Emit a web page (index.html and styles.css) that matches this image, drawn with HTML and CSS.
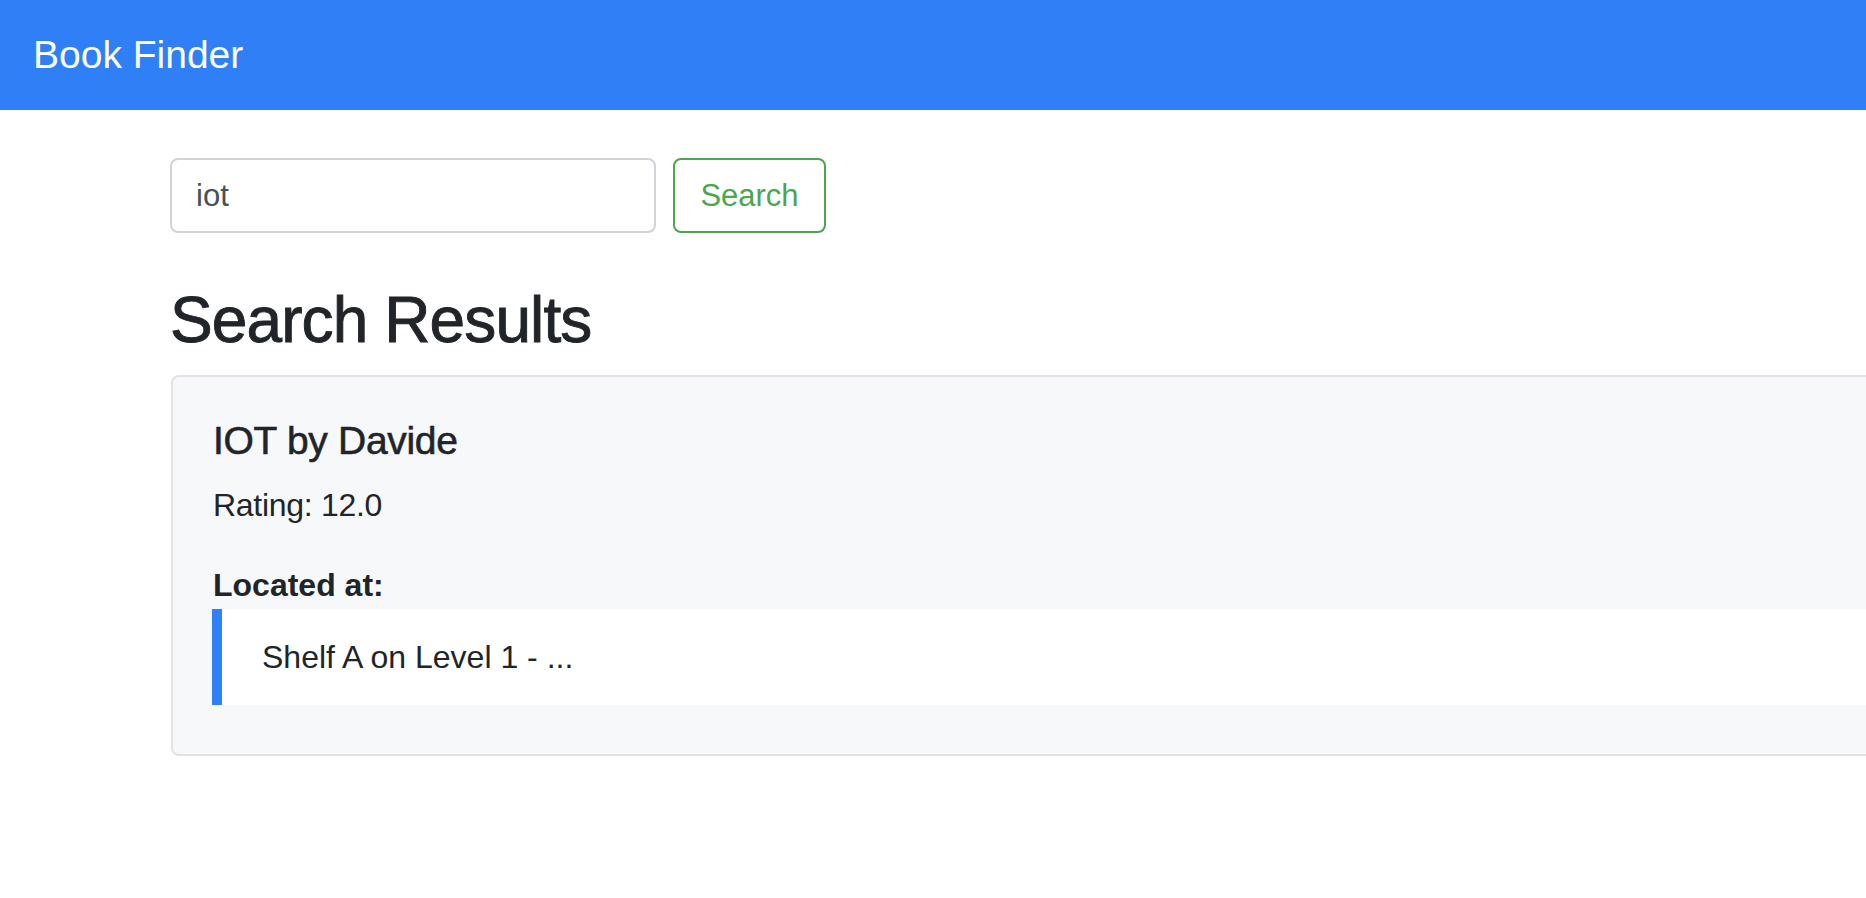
FILE: index.html
```html
<!DOCTYPE html>
<html lang="en">
<head>
<meta charset="utf-8">
<title>Book Finder</title>
<link rel="stylesheet" href="styles.css">
</head>
<body>
<nav class="navbar">
  <span class="brand">Book Finder</span>
</nav>
<main class="container">
  <form class="search-form">
    <input class="search-input" type="text" value="iot">
    <button class="search-btn" type="button">Search</button>
  </form>
  <h2 class="results-title">Search Results</h2>
  <div class="card">
    <h5 class="card-title">IOT by Davide</h5>
    <p class="rating">Rating: 12.0</p>
    <div class="located">Located at:</div>
    <ul class="locations">
      <li class="location-item">Shelf A on Level 1 - ...</li>
    </ul>
  </div>
</main>
</body>
</html>
```
FILE: styles.css
```css
html, body {
  margin: 0;
  padding: 0;
  background: #ffffff;
  overflow-x: hidden;
}
body {
  font-family: "Liberation Sans", Arial, sans-serif;
  font-size: 32px;
  line-height: 1.5;
  color: #212529;
}
.navbar {
  height: 110px;
  background: #2f7ff6;
  display: flex;
  align-items: center;
  padding: 0 33px;
  box-sizing: border-box;
}
.brand {
  color: #ffffff;
  font-size: 39px;
  line-height: 1;
  margin-top: -2px;
}
.container {
  padding-left: 170px;
  margin-right: -60px;
}
.search-form {
  display: flex;
  align-items: stretch;
  gap: 17px;
  margin: 48px 0 0 0;
}
.search-input {
  width: 486px;
  height: 75px;
  box-sizing: border-box;
  border: 2px solid #d0d4d9;
  border-radius: 8px;
  padding: 0 24px;
  font-family: "Liberation Sans", Arial, sans-serif;
  font-size: 31px;
  color: #495057;
  background: #ffffff;
  outline: none;
}
.search-btn {
  width: 153px;
  height: 75px;
  box-sizing: border-box;
  border: 2px solid #4ba64f;
  border-radius: 8px;
  background: #ffffff;
  color: #4ba64f;
  font-family: "Liberation Sans", Arial, sans-serif;
  font-size: 31px;
  padding: 0;
}
.results-title {
  font-size: 64px;
  font-weight: 500;
  line-height: 1.2;
  margin: 49px 0 16px 0;
  letter-spacing: -0.9px;
  -webkit-text-stroke: 0.9px #212529;
}
.card {
  background: #f7f8fa;
  border: 2px solid #e0e2e5;
  border-radius: 8px;
  padding: 40px 40px 40px 40px;
  margin-left: 1px;
}
.card-title {
  font-size: 39px;
  font-weight: 500;
  line-height: 48px;
  margin: 0 0 16px 0;
  letter-spacing: -0.3px;
  -webkit-text-stroke: 0.6px #212529;
}
.rating {
  margin: 0 0 32px 0;
  line-height: 48px;
  letter-spacing: -0.3px;
}
.located {
  font-weight: bold;
  line-height: 48px;
}
.locations {
  list-style: none;
  margin: 0 0 9px -1px;
  padding: 0;
}
.location-item {
  background: #ffffff;
  border-left: 10px solid #2f7ff6;
  padding: 24px 40px;
  line-height: 48px;
}
```
